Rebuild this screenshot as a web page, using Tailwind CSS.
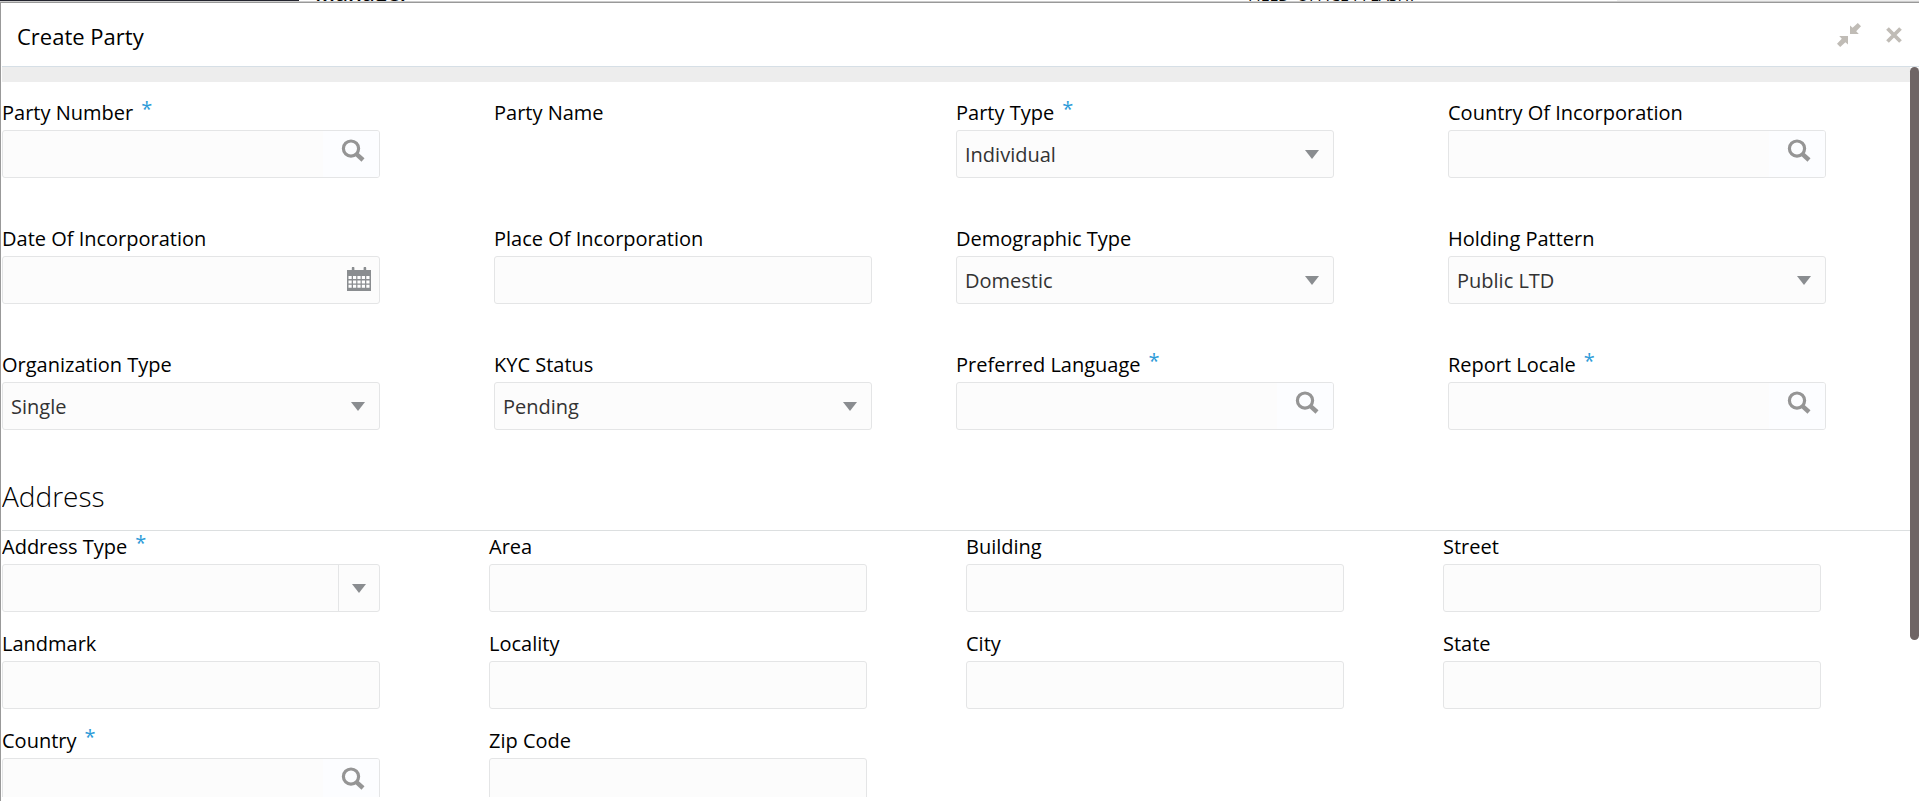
<!DOCTYPE html>
<html lang="en">
<head>
<meta charset="utf-8">
<title>Create Party</title>
<script src="https://cdn.jsdelivr.net/npm/@tailwindcss/browser@4"></script>
</head>
<body class="h-screen overflow-hidden bg-white font-['Open_Sans','Noto_Sans',sans-serif] text-black">
<svg class="hidden" aria-hidden="true">
  <symbol id="search" viewBox="0 0 24 24"><circle cx="10" cy="9.6" r="7.6" fill="none" stroke="currentColor" stroke-width="3.2"/><path d="M15.2 14.8 22 21" fill="none" stroke="currentColor" stroke-width="4.4"/></symbol>
  <symbol id="caret" viewBox="0 0 14 9"><path d="M0 0H14L7 9Z" fill="currentColor"/></symbol>
</svg>
<div class="flex h-full flex-col">
  <!-- Page behind the dialog, only its last pixels are visible -->
  <div class="flex h-[2px] shrink-0 items-end overflow-hidden border-b border-[#cccccc]">
    <div class="h-full w-[299px] shrink-0 bg-[#23242e]"></div>
    <div class="flex-1 pl-4 text-[22px] leading-[17px] font-semibold">Manager</div>
    <div class="w-[369px] text-[16px] leading-[12px]">FIELD_OFFICE ( FLASH)</div>
    <div class="h-full w-[302px] bg-[#eeeeee]"></div>
  </div>
  <div role="dialog" aria-labelledby="title" class="flex min-h-0 flex-1 flex-col border-t border-l border-[#999999] pb-1 pl-px">
    <header class="flex h-16 shrink-0 items-center justify-between border-b border-[#d6dfe6] pr-[17px] pl-[15px]">
      <h1 id="title" class="pt-[2px] text-[22px] leading-8">Create Party</h1>
      <div class="flex items-center gap-[25px] text-[#c0bcb6]">
        <button type="button" aria-label="Collapse"><svg class="size-6" viewBox="0 0 24 24" fill="currentColor"><path d="M13 11V2.4l2.6 2.4L20.8 0 24 3.2 19.2 8.2l2.6 2.8ZM11 13V21.6l-2.6-2.4L3.2 24 0 20.8 4.8 15.8 2.2 13Z"/></svg></button>
        <button type="button" aria-label="Close"><svg class="size-4" viewBox="0 0 16 16" fill="none" stroke="currentColor" stroke-width="3.8"><path d="M1.5 1.5l13 13M14.5 1.5l-13 13"/></svg></button>
      </div>
    </header>
    <div class="flex min-h-0 flex-1">
      <main class="min-w-0 flex-1 overflow-hidden">
        <div class="h-[15px] bg-[#ededed]"></div>
        <form id="form" class="text-[20px]">
          <div id="party" class="grid grid-cols-[492fr_462fr_492fr_462fr] gap-y-[45px] pt-[15px]"></div>
          <h2 class="mt-[45px] border-b border-[#dcdfe0] pb-[13px] text-[28px] leading-[42px] font-light">Address</h2>
          <div id="address" class="grid grid-cols-4 gap-y-4"></div>
        </form>
      </main>
      <div class="h-[573px] w-[9px] shrink-0 rounded-full bg-[#6f6565]"></div>
    </div>
  </div>
</div>
<script>
const party = [
  ['Party Number', 'search', 1], ['Party Name', 'none'], ['Party Type', 'select', 1, 'Individual'], ['Country Of Incorporation', 'search'],
  ['Date Of Incorporation', 'date'], ['Place Of Incorporation', 'text'], ['Demographic Type', 'select', 0, 'Domestic'], ['Holding Pattern', 'select', 0, 'Public LTD'],
  ['Organization Type', 'select', 0, 'Single'], ['KYC Status', 'select', 0, 'Pending'], ['Preferred Language', 'search', 1], ['Report Locale', 'search', 1]];
const address = [
  ['Address Type', 'combo', 1], ['Area', 'text'], ['Building', 'text'], ['Street', 'text'],
  ['Landmark', 'text'], ['Locality', 'text'], ['City', 'text'], ['State', 'text'],
  ['Country', 'search', 1], ['Zip Code', 'text']];
const calendar = '<svg class="size-6" viewBox="0 0 24 24"><path d="M0 3H4.8V1a1.3 1.3 0 0 1 2.6 0V3H16.6V1a1.3 1.3 0 0 1 2.6 0V3H24V24H0Z" fill="#8a8d90"/><path d="M1.5 9h3.2v3H1.5zM6 9h3.2v3H6zM10.4 9h3.2v3h-3.2zM14.8 9h3.2v3h-3.2zM19.3 9h3.2v3h-3.2zM1.5 13.4h3.2v3H1.5zM6 13.4h3.2v3H6zM10.4 13.4h3.2v3h-3.2zM14.8 13.4h3.2v3h-3.2zM19.3 13.4h3.2v3h-3.2zM1.5 17.8h3.2v3H1.5zM6 17.8h3.2v3H6zM10.4 17.8h3.2v3h-3.2zM14.8 17.8h3.2v3h-3.2zM19.3 17.8h3.2v3h-3.2z" fill="#fff"/></svg>';
const box = 'flex h-12 w-[378px] max-w-full overflow-hidden rounded-[3px] border border-[#e4e5e6] bg-[#fcfcfc]';
function field([label, type, required, value], cls) {
  const id = label.toLowerCase().replace(/ /g, '-');
  const star = required ? '<span class="ml-2 align-[4px] leading-none text-[#2d9bd8]" aria-hidden="true">*</span>' : '';
  const input = `<input id="${id}" type="text" class="min-w-0 flex-1 px-2 outline-none">`;
  let control = '';
  if (type === 'text') control = `<div class="${box}">${input}</div>`;
  if (type === 'search') control = `<div class="${box}">${input}<button type="button" aria-label="Search ${label}" class="flex w-14 items-start bg-[#fcfdff] pt-2 pl-[18px] text-[#959595]"><svg class="size-6"><use href="#search"/></svg></button></div>`;
  if (type === 'date') control = `<div class="${box}">${input}<button type="button" aria-label="Select date" class="flex items-start pt-[10px] pr-2">${calendar}</button></div>`;
  if (type === 'combo') control = `<div class="${box}">${input}<button type="button" aria-label="Open ${label}" class="flex w-[41px] items-center justify-center border-l border-[#e4e5e6] text-[#8a8d90]"><svg class="h-[9px] w-[14px]"><use href="#caret"/></svg></button></div>`;
  if (type === 'select') control = `<div class="relative w-[378px] max-w-full"><select id="${id}" class="h-12 w-full appearance-none rounded-[3px] border border-[#e4e5e6] bg-[#fcfcfc] px-2 pt-[2px] text-[#333333]"><option>${value}</option></select><svg class="pointer-events-none absolute top-5 right-[15px] h-[9px] w-[14px] text-[#8a8d90]"><use href="#caret"/></svg></div>`;
  const tag = type === 'none' ? 'span' : 'label';
  return `<div class="${cls}"><${tag} ${tag === 'label' ? `for="${id}"` : ''} class="block h-[33px] leading-8">${label}${star}</${tag}>${control}</div>`;
}
document.getElementById('party').innerHTML = party.map(f => field(f, '')).join('');
document.getElementById('address').innerHTML = address.map((f, i) => field(f, i % 4 ? 'pl-[10px]' : '')).join('');
</script>
</body>
</html>
